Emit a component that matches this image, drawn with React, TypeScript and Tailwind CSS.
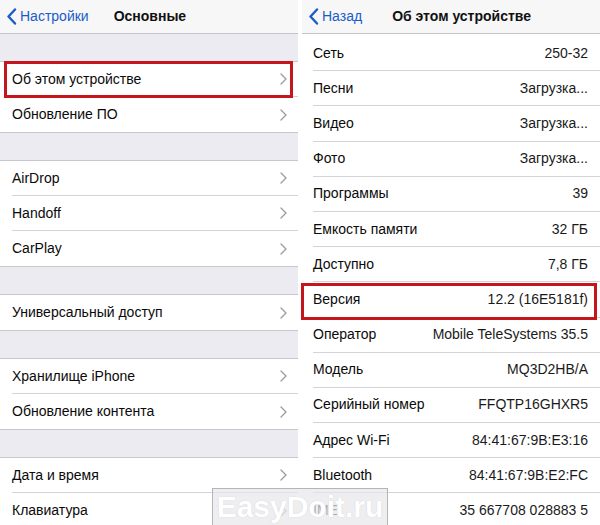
import type { ReactNode } from 'react';

const font = { fontFamily: '"Liberation Sans", Arial, sans-serif' };

function BackChevron() {
  return (
    <svg width="11" height="17" viewBox="0 0 11 17" className="shrink-0">
      <polyline points="9,1.5 2.5,8.5 9,15.5" fill="none" stroke="#1a5cc8" strokeWidth="2.4" strokeLinecap="round" strokeLinejoin="round" />
    </svg>
  );
}

function RowChevron() {
  return (
    <svg width="7" height="12" viewBox="0 0 7 12" className="shrink-0">
      <polyline points="1,1 6,6 1,11" fill="none" stroke="#9a9aa0" strokeWidth="1.3" strokeLinecap="round" strokeLinejoin="round" />
    </svg>
  );
}

function NavBar({ back, title, titleClass }: { back: string; title: string; titleClass: string }) {
  return (
    <div className="flex h-[34px] shrink-0 items-center border-b border-[#c4c4c8] bg-[#f7f7f8]">
      <div className="flex items-center gap-[3px] pl-[6px]">
        <BackChevron />
        <span className="text-[14px] text-[#1a5cc8]">{back}</span>
      </div>
      <span className={`text-[14px] font-bold text-[#111] ${titleClass}`}>{title}</span>
    </div>
  );
}

function Gap() {
  return <div className="h-[27px] shrink-0 bg-[#ebebf1]" />;
}

function Group({ children }: { children: ReactNode }) {
  return <div className="shrink-0 border-y border-[#c8c7cc] bg-white">{children}</div>;
}

function LinkRow({ label, last, marked }: { label: string; last?: boolean; marked?: boolean }) {
  return (
    <div className="relative pl-[12px]">
      <div className={`flex h-[35px] items-center justify-between pr-[11px] ${last ? '' : 'border-b border-[#d4d4d8]'}`}>
        <span className="text-[14px] text-[#0a0a0a]">{label}</span>
        <RowChevron />
      </div>
      {marked ? <div className="absolute -top-[1px] right-[5px] bottom-[-1px] left-[4px] border-[3px] border-[#c5161e]" /> : null}
    </div>
  );
}

function InfoRow({ label, value, marked }: { label: string; value: string; marked?: boolean }) {
  return (
    <div className="relative pl-[11px]">
      <div className="flex h-[35.2px] items-center justify-between border-b border-[#d4d4d8] pr-[12px]">
        <span className="text-[14px] text-[#0a0a0a]">{label}</span>
        <span className="text-[14px] text-[#1a1a1a]">{value}</span>
      </div>
      {marked ? <div className="absolute top-[1px] right-[3px] bottom-[-2px] left-[-1px] border-[3px] border-[#c5161e]" /> : null}
    </div>
  );
}

const info: [string, string][] = [
  ['Сеть', '250-32'],
  ['Песни', 'Загрузка...'],
  ['Видео', 'Загрузка...'],
  ['Фото', 'Загрузка...'],
  ['Программы', '39'],
  ['Емкость памяти', '32 ГБ'],
  ['Доступно', '7,8 ГБ'],
  ['Версия', '12.2 (16E5181f)'],
  ['Оператор', 'Mobile TeleSystems 35.5'],
  ['Модель', 'MQ3D2HB/A'],
  ['Серийный номер', 'FFQTP16GHXR5'],
  ['Адрес Wi-Fi', '84:41:67:9B:E3:16'],
  ['Bluetooth', '84:41:67:9B:E2:FC'],
  ['IMEI', '35 667708 028883 5'],
];

export default function App() {
  return (
    <div className="relative flex h-[525px] w-[600px] overflow-hidden bg-white" style={font}>
      <div className="flex w-[298px] shrink-0 flex-col bg-[#ebebf1]">
        <NavBar back="Настройки" title="Основные" titleClass="ml-[25px]" />
        <Gap />
        <Group>
          <LinkRow label="Об этом устройстве" marked />
          <LinkRow label="Обновление ПО" last />
        </Group>
        <Gap />
        <Group>
          <LinkRow label="AirDrop" />
          <LinkRow label="Handoff" />
          <LinkRow label="CarPlay" last />
        </Group>
        <Gap />
        <Group>
          <LinkRow label="Универсальный доступ" last />
        </Group>
        <Gap />
        <Group>
          <LinkRow label="Хранилище iPhone" />
          <LinkRow label="Обновление контента" last />
        </Group>
        <Gap />
        <Group>
          <LinkRow label="Дата и время" />
          <LinkRow label="Клавиатура" last />
        </Group>
      </div>

      <div className="ml-[4px] flex flex-1 flex-col bg-white">
        <NavBar back="Назад" title="Об этом устройстве" titleClass="ml-[30px]" />
        <div className="h-[2px] shrink-0" />
        {info.map(([label, value]) => (
          <InfoRow key={label} label={label} value={value} marked={label === 'Версия'} />
        ))}
      </div>

      <div className="absolute top-[488px] left-[212px] flex h-[40px] w-[176px] items-center justify-center border border-[#b5b5b8] bg-[rgba(232,232,236,0.72)] pb-[4px]">
        <span className="text-[30px] font-bold text-white [text-shadow:0_0_1px_#c4c4c8]">EasyDoit.ru</span>
      </div>
    </div>
  );
}
